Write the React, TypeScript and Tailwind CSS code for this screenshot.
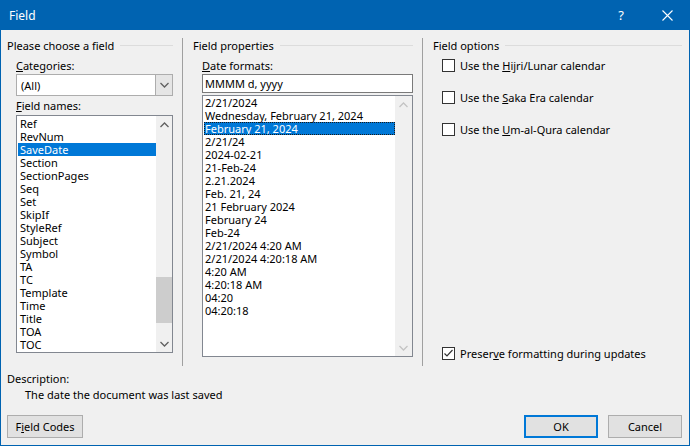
import React from "react"

const fieldNames = ["Ref","RevNum","SaveDate","Section","SectionPages","Seq","Set","SkipIf","StyleRef","Subject","Symbol","TA","TC","Template","Time","Title","TOA","TOC"]

const formats = ["2/21/2024","Wednesday, February 21, 2024","February 21, 2024","2/21/24","2024-02-21","21-Feb-24","2.21.2024","Feb. 21, 24","21 February 2024","February 24","Feb-24","2/21/2024 4:20 AM","2/21/2024 4:20:18 AM","4:20 AM","4:20:18 AM","04:20","04:20:18"]

const Chevron = ({ up, color }: { up?: boolean; color: string }) => (
  <svg width="9" height="6" viewBox="0 0 9 6" className={up ? "" : "rotate-180"}>
    <path d="M0.5 5 L4.5 1 L8.5 5" fill="none" stroke={color} strokeWidth="1.3" />
  </svg>
)

const GroupHeader = ({ title }: { title: string }) => (
  <div className="flex items-center h-[14px]">
    <span>{title}</span>
    <div className="flex-1 h-px bg-[#dcdcdc] ml-[6px]"></div>
  </div>
)

const Check = ({ checked }: { checked?: boolean }) => (
  <div className="w-[13px] h-[13px] border border-[#333] bg-white flex items-center justify-center">
    {checked && (
      <svg width="11" height="11" viewBox="0 0 11 11">
        <path d="M1.5 5.5 L4 8 L9.5 2" fill="none" stroke="#333" strokeWidth="1.2" />
      </svg>
    )}
  </div>
)

export default function App() {
  return (
    <div className="w-[690px] h-[446px] bg-[#f0f0f0] border border-t-0 border-[#0063b1] flex flex-col text-[11px] text-black leading-[13px]" style={{ fontFamily: "'Noto Sans', sans-serif" }}>
      {/* title bar */}
      <div className="h-[30px] bg-[#0063b1] flex items-center text-white text-[12px] -mx-px">
        <span className="ml-[9px] flex-1">Field</span>
        <span className="w-[46px] text-center text-[13px]">?</span>
        <div className="w-[46px] flex justify-center">
          <svg width="11" height="11" viewBox="0 0 11 11">
            <path d="M0.5 0.5 L10.5 10.5 M10.5 0.5 L0.5 10.5" stroke="white" strokeWidth="1.1" />
          </svg>
        </div>
      </div>

      {/* groups */}
      <div className="flex pt-[8px] pl-[6px] h-[336px]">
        {/* left */}
        <div className="w-[166px] flex flex-col">
          <GroupHeader title="Please choose a field" />
          <div className="pl-[9px] flex flex-col">
            <div className="mt-[7px] h-[13px] flex items-center"><span><u>C</u>ategories:</span></div>
            <div className="mt-[2px] h-[22px] border border-[#adadad] bg-white flex">
              <div className="flex-1 flex items-center pl-[4px]">(All)</div>
              <div className="w-[17px] bg-[#e5e5e5] flex items-center justify-center border-l border-[#adadad]">
                <Chevron color="#606060" />
              </div>
            </div>
            <div className="mt-[2px] h-[14px] flex items-center"><span><u>F</u>ield names:</span></div>
            <div className="mt-[3px] h-[238px] border border-[#828790] bg-white flex">
              <div className="flex-1 pt-px pl-px">
                {fieldNames.map((n) => (
                  <div key={n} className={"h-[13px] flex items-center pl-[2px] " + (n === "SaveDate" ? "bg-[#0078d7] text-white" : "")}>{n}</div>
                ))}
              </div>
              <div className="w-[16px] bg-[#f0f0f0] flex flex-col items-center">
                <div className="h-[17px] flex items-center justify-center"><Chevron up color="#606060" /></div>
                <div className="flex-1 w-full flex flex-col">
                  <div className="h-[144px]"></div>
                  <div className="h-[46px] bg-[#cdcdcd]"></div>
                </div>
                <div className="h-[17px] flex items-center justify-center"><Chevron color="#606060" /></div>
              </div>
            </div>
          </div>
        </div>

        <div className="ml-[9px] w-px bg-[#a0a0a0] h-[328px]"></div>

        {/* middle */}
        <div className="ml-[10px] w-[220px] flex flex-col">
          <GroupHeader title="Field properties" />
          <div className="pl-[9px] flex flex-col">
            <div className="mt-[7px] h-[13px] flex items-center"><span><u>D</u>ate formats:</span></div>
            <div className="mt-[2px] h-[19px] border border-[#7a7a7a] bg-white flex items-center pl-[2px]">MMMM d, yyyy</div>
            <div className="mt-[2px] h-[262px] border border-[#828790] bg-white flex">
              <div className="flex-1 pt-0 pl-px">
                {formats.map((f) => (
                  <div key={f} className={"h-[13px] flex items-center pl-[1px] " + (f === "February 21, 2024" ? "bg-[#0078d7] text-white outline outline-1 outline-dotted outline-[#1a1a1a] -outline-offset-1" : "")}>{f}</div>
                ))}
              </div>
              <div className="w-[17px] bg-[#f0f0f0] flex flex-col items-center justify-between">
                <div className="h-[17px] flex items-center justify-center"><Chevron up color="#c4c4c4" /></div>
                <div className="h-[17px] flex items-center justify-center"><Chevron color="#c4c4c4" /></div>
              </div>
            </div>
          </div>
        </div>

        <div className="ml-[9px] w-px bg-[#a0a0a0] h-[328px]"></div>

        {/* right */}
        <div className="ml-[10px] w-[249px] flex flex-col">
          <GroupHeader title="Field options" />
          <div className="pl-[9px] flex flex-col">
            <div className="mt-[7px] flex items-center gap-[5px]"><Check /><span>Use the <u>H</u>ijri/Lunar calendar</span></div>
            <div className="mt-[19px] flex items-center gap-[5px]"><Check /><span>Use the <u>S</u>aka Era calendar</span></div>
            <div className="mt-[19px] flex items-center gap-[5px]"><Check /><span>Use the <u>U</u>m-al-Qura calendar</span></div>
            <div className="mt-[211px] flex items-center gap-[5px]"><Check checked /><span>Preser<u>v</u>e formatting during updates</span></div>
          </div>
        </div>
      </div>

      {/* description */}
      <div className="pl-[6px] flex flex-col">
        <div className="mt-[5px] h-[14px] flex items-center">Description:</div>
        <div className="mt-[2px] h-[14px] flex items-center pl-[18px]">The date the document was last saved</div>
      </div>

      {/* buttons */}
      <div className="mt-[14px] flex px-[7px] pl-[6px]">
        <button className="w-[76px] h-[23px] bg-[#e1e1e1] border border-[#adadad]">F<u>i</u>eld Codes</button>
        <div className="flex-1"></div>
        <button className="w-[74px] h-[23px] bg-[#e1e1e1] border-2 border-[#0078d7]">OK</button>
        <button className="ml-[10px] w-[74px] h-[23px] bg-[#e1e1e1] border border-[#adadad]">Cancel</button>
      </div>
    </div>
  )
}
